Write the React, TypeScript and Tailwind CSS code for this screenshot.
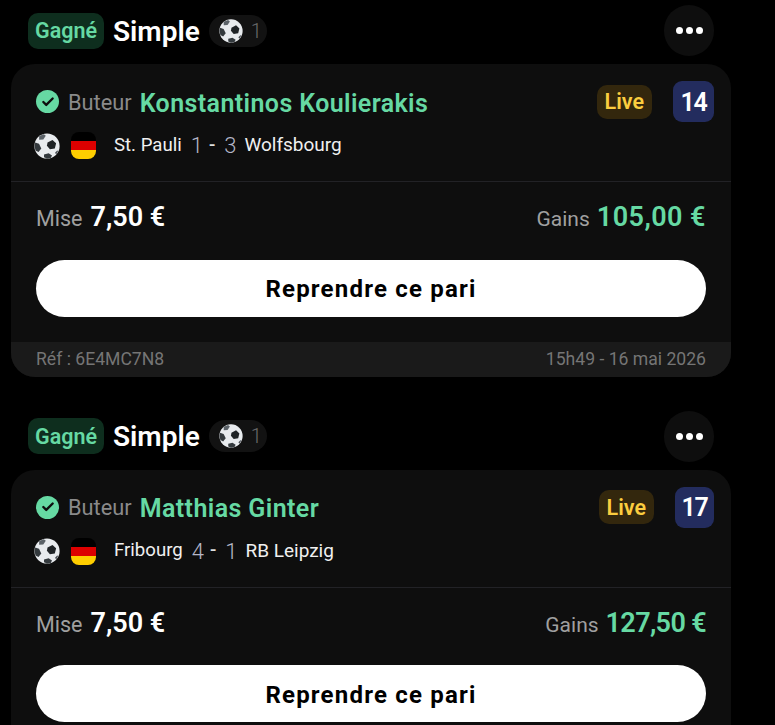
import React from 'react';
import { Check } from 'lucide-react';

interface Bet {
  player: string;
  home: string;
  away: string;
  homeScore: number;
  awayScore: number;
  minute: number;
  minuteWidth: string;
  gains: string;
  gainsSpacing: string;
  ref: string;
  date: string;
}

const bets: Bet[] = [
  { player: 'Konstantinos Koulierakis', home: 'St. Pauli', away: 'Wolfsbourg', homeScore: 1, awayScore: 3, minute: 14, minuteWidth: 'w-[41px]', gains: '105,00 €', gainsSpacing: 'tracking-[0.45px]', ref: '6E4MC7N8', date: '15h49 - 16 mai 2026' },
  { player: 'Matthias Ginter', home: 'Fribourg', away: 'RB Leipzig', homeScore: 4, awayScore: 1, minute: 17, minuteWidth: 'w-[39px]', gains: '127,50 €', gainsSpacing: 'tracking-[-0.65px]', ref: '6E4MC7N8', date: '15h49 - 16 mai 2026' },
];

const Ball: React.FC<{ size: number }> = ({ size }) => (
  <svg width={size} height={size} viewBox="0 0 26 26" className="shrink-0">
    <circle cx="13" cy="13" r="12.6" fill="#e8ebee" />
    <path d="M13 .4a12.6 12.6 0 0 1 8.9 21.5A12.6 12.6 0 0 0 13 .4z" fill="#b4bac0" />
    <path d="M14.5 8.5l5-2.6 3.6 3.4-1.3 5.2-4.9.7-3-3.4z" fill="#1f2326" transform="translate(-1 1)" />
    <path d="M5.2 2.9l4.6-1.7 2 1.6-2.5 3.6-4.2.3z" fill="#5b6268" />
    <path d="M1.2 9.6l3.8 1.2 2.3 4.6-2.8 3.6-3-1.6-.9-4.4z" fill="#33393d" />
    <path d="M10 21.4l4.6-1.2 3.4 2.2-1.2 2.6-3.8.6-3-1.3z" fill="#33393d" />
    <path d="M21 19.8l2.2-2.2.9.4-1.9 3.4z" fill="#4a5056" />
  </svg>
);

const Flag: React.FC = () => (
  <div className="flex h-[27px] w-[25px] shrink-0 flex-col overflow-hidden rounded-[8px]">
    <div className="h-[9px] bg-black" />
    <div className="h-[9px] bg-[#dd0000]" />
    <div className="h-[9px] bg-[#ffce00]" />
  </div>
);

const BetCard: React.FC<{ bet: Bet }> = ({ bet }) => (
  <div className="mb-[34px]">
    <div className="flex h-[51px] items-center justify-between pl-[28px] pr-[61px]">
      <div className="flex items-center">
        <span className="flex h-[36px] w-[76px] items-center justify-center rounded-[10px] bg-[#0e2e1e] pt-[2px] text-[21.5px] font-semibold text-[#66d9a3]">Gagné</span>
        <span className="mt-[2px] ml-[9px] text-[28px] leading-none font-semibold text-white">Simple</span>
        <span className="ml-[9px] flex h-[32px] w-[58px] items-center rounded-full bg-[#121212] pl-[10px]">
          <Ball size={24} />
          <span className="ml-[8px] text-[20px] font-light text-[#6a6a6a]">1</span>
        </span>
      </div>
      <button className="flex h-[51px] w-[50px] items-center justify-center gap-[3px] rounded-full bg-[#0e0e0e]">
        <span className="h-[7px] w-[7px] rounded-full bg-white" />
        <span className="h-[7px] w-[7px] rounded-full bg-white" />
        <span className="h-[7px] w-[7px] rounded-full bg-white" />
      </button>
    </div>

    <div className="mt-[8px] ml-[11px] w-[720px] overflow-hidden rounded-[24px] bg-[#0e0e0e]">
      <div className="h-[118px] border-b border-[#222226] pt-[17px] pr-[17px] pl-[25px]">
        <div className="flex items-center justify-between">
          <div className="flex items-center">
            <span className="flex h-[23px] w-[23px] items-center justify-center rounded-full bg-[#66d9a3]">
              <Check size={14} strokeWidth={4} color="#0e0e0e" />
            </span>
            <span className="mt-[3px] ml-[9px] text-[21.8px] text-[#8a8a8a]">Buteur</span>
            <span className="mt-[3px] ml-[8px] text-[25px] leading-none font-semibold tracking-[0.4px] text-[#66d9a3]">{bet.player}</span>
          </div>
          <div className="flex items-center">
            <span className="mr-[21px] flex h-[34px] items-center rounded-[10px] bg-[#33270d] px-[8px] pt-[2px] text-[21.5px] font-semibold text-[#fbcd3f]">Live</span>
            <span className={`${bet.minuteWidth} flex h-[41px] items-center justify-center rounded-[9px] bg-[#232c5e] pt-[2px] text-[25px] font-semibold tracking-[-1.2px] text-white`}>{bet.minute}</span>
          </div>
        </div>
        <div className="mt-[7px] -ml-[2px] flex items-center">
          <Ball size={26} />
          <span className="ml-[11px]"><Flag /></span>
          <span className="ml-[18px] text-[18.6px] text-[#f0f0f0]">{bet.home}</span>
          <span className="ml-[9px] text-[22px] font-light text-[#b4b6c8]">{bet.homeScore}</span>
          <span className="mr-[9px] ml-[6px] text-[18.6px] font-medium text-[#e0e0e0]">-</span>
          <span className="text-[22px] font-light text-[#b4b6c8]">{bet.awayScore}</span>
          <span className="ml-[8px] text-[19px] text-[#f0f0f0]">{bet.away}</span>
        </div>
      </div>

      <div className="flex items-center justify-between px-[25px] pt-[15px]">
        <div className="flex items-baseline">
          <span className="text-[21.5px] text-[#a0a0a0]">Mise</span>
          <span className="ml-[8px] text-[27px] font-semibold text-white">7,50 €</span>
        </div>
        <div className="flex items-baseline">
          <span className="text-[21px] text-[#a0a0a0]">Gains</span>
          <span className={`${bet.gainsSpacing} ml-[7px] text-[27px] font-semibold text-[#66d9a3]`}>{bet.gains}</span>
        </div>
      </div>

      <div className="px-[25px] pt-[22px] pb-[25px]">
        <button className="h-[57px] w-full rounded-full bg-white pt-[2px] text-[24px] font-bold tracking-[1.2px] text-black">Reprendre ce pari</button>
      </div>

      <div className="flex h-[35px] items-center justify-between bg-[#1a1a1a] px-[25px] text-[17.6px] text-[#757575]">
        <span>Réf : {bet.ref}</span>
        <span>{bet.date}</span>
      </div>
    </div>
  </div>
);

export default function App() {
  return (
    <div className="h-[725px] w-[775px] overflow-hidden bg-black pt-[5px] font-['Roboto',sans-serif]">
      {bets.map(bet => (
        <BetCard key={bet.player} bet={bet} />
      ))}
    </div>
  );
}
